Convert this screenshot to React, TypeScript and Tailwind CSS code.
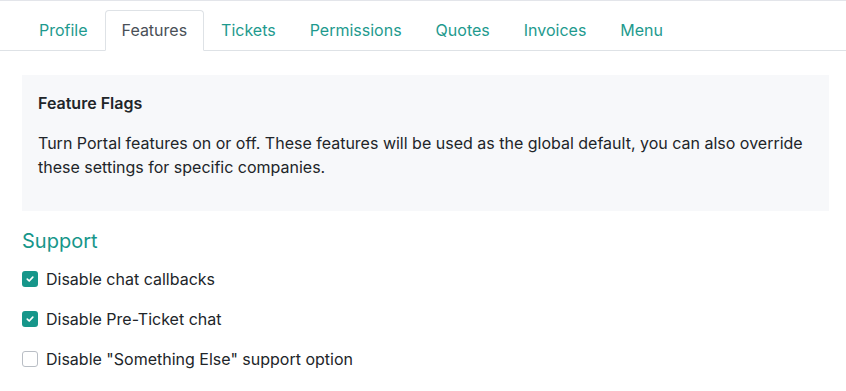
import React from "react";

const tabs = ["Profile", "Features", "Tickets", "Permissions", "Quotes", "Invoices", "Menu"];

function Check({ checked }: { checked: boolean }) {
  return checked ? (
    <span className="flex h-4 w-4 shrink-0 items-center justify-center rounded-[3px] bg-[#16968a]">
      <svg width="10" height="10" viewBox="0 0 10 10">
        <path d="M2.3 5.2 L4.2 7 L7.8 3.2" fill="none" stroke="#fff" strokeWidth="1.7" strokeLinecap="round" strokeLinejoin="round" />
      </svg>
    </span>
  ) : (
    <span className="h-4 w-4 shrink-0 rounded-[3px] border border-[#b9bec5] bg-white" />
  );
}

export default function App() {
  const items = [
    { label: "Disable chat callbacks", checked: true },
    { label: "Disable Pre-Ticket chat", checked: true },
    { label: 'Disable "Something Else" support option', checked: false },
  ];
  return (
    <div
      className="min-h-[391px] w-[846px] border-t border-[#e3e5ea] bg-white text-[#212529]"
      style={{ fontFamily: "Inter, 'Noto Sans', sans-serif" }}
    >
      <div className="mt-[9px] flex border-b border-[#dee2e6] pl-[22px]">
        {tabs.map((t) => (
          <div
            key={t}
            className={
              t === "Features"
                ? "-mb-px flex h-[41px] items-center rounded-t-[4px] border border-[#dee2e6] border-b-white bg-white px-4 pb-px text-[16px] text-[#495057]"
                : "-mb-px flex h-[41px] items-center border border-transparent px-4 pb-px text-[16px] text-[#1e9a8e]"
            }
          >
            {t}
          </div>
        ))}
      </div>
      <div className="pl-[22px] pr-[17px] pt-[24px]">
        <div className="h-[136px] bg-[#f7f8fa] px-4 pt-[16px]">
          <div className="text-[16px] font-semibold leading-[24px] text-[#212529]">Feature Flags</div>
          <p className="mt-[16px] text-[16px] leading-[24px] text-[#212529]">
            Turn Portal features on or off. These features will be used as the global default, you can also override
            these settings for specific companies.
          </p>
        </div>
        <div className="mt-[16px] text-[20px] leading-[28px] text-[#16968a]">Support</div>
        <div className="mt-[12px] flex flex-col gap-[16px]">
          {items.map((it) => (
            <label key={it.label} className="flex h-[24px] items-center gap-[8px] text-[16px]">
              <Check checked={it.checked} />
              <span>{it.label}</span>
            </label>
          ))}
        </div>
      </div>
    </div>
  );
}
